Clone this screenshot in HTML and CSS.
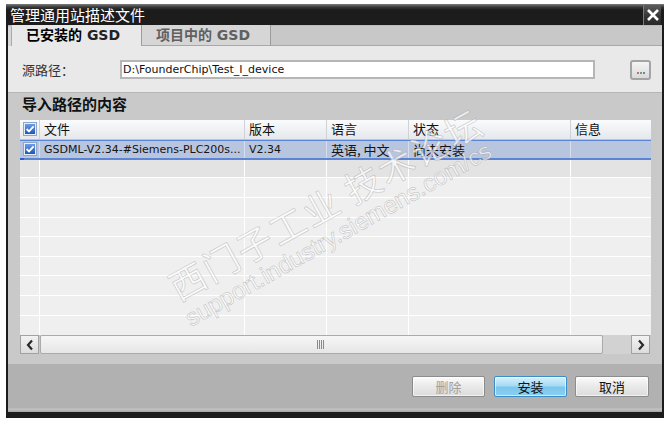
FILE: index.html
```html
<!DOCTYPE html>
<html lang="zh-CN">
<head>
<meta charset="utf-8">
<title>管理通用站描述文件</title>
<link rel="stylesheet" href="styles.css">
</head>
<body>
<div class="dialog">
  <div class="titlebar">
    <span class="title">管理通用站描述文件</span>
    <span class="close"><svg width="14" height="14" viewBox="0 0 14 14"><path d="M2 2 L12 12 M12 2 L2 12" stroke="#fff" stroke-width="2.6" fill="none"/></svg></span>
  </div>
  <div class="main">
    <div class="tabs">
      <div class="tab-stub"></div>
      <div class="tab active">已安装的 <span class="gsd">GSD</span></div>
      <div class="tab inactive">项目中的 GSD</div>
    </div>
    <div class="source">
      <span class="label">源路径：</span>
      <div class="input">D:\FounderChip\Test_I_device</div>
      <div class="browse"><i class="d1"></i><i class="d2"></i><i class="d3"></i></div>
    </div>
    <div class="section">
      <div class="section-title">导入路径的内容</div>
      <div class="table">
        <div class="row head">
          <div class="cell c0"><svg class="cb" width="14" height="14" viewBox="0 0 14 14"><defs><linearGradient id="g1" x1="0" y1="0" x2="0" y2="1"><stop offset="0" stop-color="#6e9de6"/><stop offset="1" stop-color="#1d55b8"/></linearGradient></defs><rect x="0.5" y="0.5" width="13" height="13" fill="#e8eef8" stroke="#8ea7c9"/><rect x="2" y="2" width="10" height="10" fill="url(#g1)"/><path d="M3.6 7 L6 9.4 L10.6 4.4" stroke="#fff" stroke-width="1.8" fill="none"/></svg></div>
          <div class="cell zh">文件</div>
          <div class="cell zh">版本</div>
          <div class="cell zh">语言</div>
          <div class="cell zh">状态</div>
          <div class="cell zh last">信息</div>
        </div>
        <div class="row sel">
          <div class="cell c0"><svg class="cb" width="14" height="14" viewBox="0 0 14 14"><defs><linearGradient id="g2" x1="0" y1="0" x2="0" y2="1"><stop offset="0" stop-color="#6e9de6"/><stop offset="1" stop-color="#1d55b8"/></linearGradient></defs><rect x="0.5" y="0.5" width="13" height="13" fill="#e8eef8" stroke="#8ea7c9"/><rect x="2" y="2" width="10" height="10" fill="url(#g2)"/><path d="M3.6 7 L6 9.4 L10.6 4.4" stroke="#fff" stroke-width="1.8" fill="none"/></svg></div>
          <div class="cell lat">GSDML-V2.34-#Siemens-PLC200s...</div>
          <div class="cell lat">V2.34</div>
          <div class="cell zh">英语, 中文</div>
          <div class="cell zh">尚未安装</div>
          <div class="cell last"></div>
        </div>
        <div class="row empty alt h18"><div class="cell"></div><div class="cell"></div><div class="cell"></div><div class="cell"></div><div class="cell"></div><div class="cell last"></div></div>
        <div class="row empty"><div class="cell"></div><div class="cell"></div><div class="cell"></div><div class="cell"></div><div class="cell"></div><div class="cell last"></div></div>
        <div class="row empty"><div class="cell"></div><div class="cell"></div><div class="cell"></div><div class="cell"></div><div class="cell"></div><div class="cell last"></div></div>
        <div class="row empty h19"><div class="cell"></div><div class="cell"></div><div class="cell"></div><div class="cell"></div><div class="cell"></div><div class="cell last"></div></div>
        <div class="row empty"><div class="cell"></div><div class="cell"></div><div class="cell"></div><div class="cell"></div><div class="cell"></div><div class="cell last"></div></div>
        <div class="row empty h19"><div class="cell"></div><div class="cell"></div><div class="cell"></div><div class="cell"></div><div class="cell"></div><div class="cell last"></div></div>
        <div class="row empty"><div class="cell"></div><div class="cell"></div><div class="cell"></div><div class="cell"></div><div class="cell"></div><div class="cell last"></div></div>
        <div class="row empty"><div class="cell"></div><div class="cell"></div><div class="cell"></div><div class="cell"></div><div class="cell"></div><div class="cell last"></div></div>
        <div class="row empty h20 nob"><div class="cell"></div><div class="cell"></div><div class="cell"></div><div class="cell"></div><div class="cell"></div><div class="cell last"></div></div>
        <div class="scrollbar">
          <div class="sbtn"><svg width="10" height="12" viewBox="0 0 10 12"><path d="M7 1.5 L3 6 L7 10.5" stroke="#2a2a2a" stroke-width="2.2" fill="none"/></svg></div>
          <div class="thumb"><svg width="10" height="9" viewBox="0 0 10 9"><path d="M1.5 0 V9 M3.5 0 V9 M5.5 0 V9 M7.5 0 V9" stroke="#8a8a8a" stroke-width="1" fill="none"/></svg></div>
          <div class="track"></div>
          <div class="sbtn"><svg width="10" height="12" viewBox="0 0 10 12"><path d="M3 1.5 L7 6 L3 10.5" stroke="#2a2a2a" stroke-width="2.2" fill="none"/></svg></div>
        </div>
      </div>
    </div>
    <div class="footer">
      <div class="btn disabled">删除</div>
      <div class="btn primary">安装</div>
      <div class="btn cancel">取消</div>
    </div>
  </div>
  <div class="wm wm-zh">西门子工业 技术论坛</div>
  <div class="wm wm-url">support.industry.siemens.com/cs</div>
</div>
</body>
</html>
```

FILE: styles.css
```css
* { box-sizing: border-box; }
body {
  margin: 0;
  background: #ffffff;
  font-family: "DejaVu Sans", "Noto Sans CJK SC", sans-serif;
  color: #111;
}
.dialog {
  position: relative;
  width: 658px;
  margin: 4px 0 0 6px;
  overflow: hidden;
}
.titlebar {
  height: 21px;
  display: flex;
  align-items: center;
  justify-content: space-between;
  padding-left: 4px;
  background: linear-gradient(#7c7c7c 0, #3a3a3a 3px, #1c1c1c 6px, #1c1c1c 100%);
}
.title {
  color: #fff;
  font-family: "Noto Sans CJK SC", sans-serif;
  font-size: 15px;
  line-height: 21px;
}
.close {
  width: 18px;
  height: 20px;
  margin: 1px 3px 0 0;
  display: flex;
  align-items: center;
  justify-content: center;
  background: linear-gradient(#5c5c5c, #333 60%, #2a2a2a);
  border-left: 1px solid #7a7a7a;
}
.main {
  border: 2px solid #1c1c1c;
  border-top: 0;
  border-bottom-width: 6px;
}
.tabs {
  height: 21px;
  display: flex;
  background: #c8c8c8;
  box-shadow: inset 0 -1px #a8a8a8, inset 0 1px #bcbcbc;
}
.tab-stub {
  width: 4px;
  background: #d8d8d8;
  border-right: 1px solid #aaa;
  margin-top: 2px;
}
.tab {
  height: 21px;
  font-family: "DejaVu Sans", "Noto Sans CJK SC", sans-serif;
  font-size: 14px;
  font-weight: bold;
  line-height: 21px;
  padding-left: 14px;
  white-space: nowrap;
}
.tab.active {
  width: 129px;
  background: #e9e9e9;
  color: #000;
}
.tab.active .gsd { color: #222; }
.tab.inactive {
  width: 130px;
  background: #d6d6d6;
  color: #606060;
  border-left: 1px solid #9c9c9c;
  border-right: 1px solid #9c9c9c;
  border-bottom: 1px solid #a8a8a8;
}
.source {
  height: 46px;
  background: #e9e9e9;
  display: flex;
  align-items: center;
  padding-left: 14px;
}
.label {
  width: 98px;
  font-family: "Noto Sans CJK SC", sans-serif;
  font-size: 13px;
  color: #333;
}
.input {
  width: 475px;
  height: 19px;
  background: #fff;
  border: 2px solid #b6b6b6;
  font-size: 11px;
  line-height: 15px;
  padding-left: 1px;
  color: #111;
}
.browse {
  width: 21px;
  height: 20px;
  margin-left: 35px;
  margin-top: 2px;
  border: 2px solid #a4a4a4;
  border-radius: 3px;
  background: linear-gradient(#f4f4f4, #dadada);
  display: flex;
  justify-content: center;
  align-items: flex-end;
  gap: 1px;
  padding-bottom: 4px;
}
.browse i { display: block; width: 2px; height: 2px; }
.browse .d1 { background: #c27070; }
.browse .d2 { background: #7b9a7b; }
.browse .d3 { background: #7080b8; }
.section {
  background: #c9c9c9;
  border-top: 1px solid #b6b6b6;
  padding: 0 11px 10px 12px;
}
.section-title {
  height: 27px;
  padding: 1px 0 0 2px;
  font-family: "Noto Sans CJK SC", sans-serif;
  font-size: 15px;
  font-weight: bold;
  line-height: 20px;
  color: #111;
}
.table {
  width: 631px;
  background: #efefef;
}
.row {
  display: grid;
  grid-template-columns: 20px 205px 82px 82px 162px 80px;
  height: 20px;
}
.cell {
  border-right: 1px solid #fff;
  padding-left: 4px;
  white-space: nowrap;
  line-height: 18px;
}
.cell.last { border-right: 0; }
.zh { font-family: "Noto Sans CJK SC", sans-serif; font-size: 13px; }
.lat { font-size: 11px; }
.c0 { padding-left: 3px; position: relative; }
.cb { display: block; margin-top: 2px; }
.row.head {
  height: 20px;
  background: linear-gradient(#fafbfc, #e5e8ec);
  border-bottom: 1px solid #c2c4c8;
}
.row.head .cell { border-right: 1px solid #cfd2d6; line-height: 18px; }
.row.head .cell.last { border-right: 0; }
.row.sel {
  height: 20px;
  background: #b8c5df;
  border-top: 1px solid #5c84d4;
  border-bottom: 2px solid #5c84d4;
}
.row.sel .cell { border-right: 1px solid #d6ddec; line-height: 17px; color: #141414; }
.row.sel .cell.last { border-right: 0; }
.row.sel .c0::after {
  content: "";
  position: absolute;
  left: 0;
  bottom: -2px;
  width: 4px;
  height: 2px;
  background: #2d5fd0;
}
.row.sel .cb { margin-top: 1px; }
.row.empty { border-bottom: 1px solid #fff; }
.row.alt { background: #e3e3e3; }
.row.h18 { height: 18px; }
.row.h19 { height: 19px; }
.row.nob { border-bottom: 0; height: 19px; }
.scrollbar {
  height: 19px;
  display: flex;
  background: #c9c9c9;
}
.sbtn {
  width: 19px;
  height: 19px;
  border: 1px solid #a2a2a2;
  background: linear-gradient(#f2f2f2, #dcdcdc);
  display: flex;
  align-items: center;
  justify-content: center;
}
.thumb {
  width: 563px;
  margin-left: 1px;
  height: 19px;
  border: 1px solid #ababab;
  border-radius: 2px;
  background: linear-gradient(#f6f6f6, #e6e6e6);
  display: flex;
  align-items: center;
  justify-content: center;
  padding-right: 1px;
}
.track {
  width: 28px;
  background: #d2d2d2;
}
.footer {
  height: 48px;
  background: linear-gradient(#b1b1b1 0, #b1b1b1 44px, #c6c6c6 45px, #a4a4a4 48px);
  display: flex;
  justify-content: flex-end;
  align-items: flex-start;
  gap: 9px;
  padding: 12px 13px 0 0;
}
.btn {
  width: 73px;
  height: 21px;
  border: 1px solid #8c8c8c;
  border-radius: 2px;
  background: linear-gradient(#fbfbfb, #e9e9e9 50%, #dcdcdc);
  box-shadow: inset 0 0 0 1px rgba(255,255,255,0.6);
  font-family: "Noto Sans CJK SC", sans-serif;
  font-size: 13px;
  line-height: 19px;
  text-align: center;
  color: #111;
}
.btn.cancel { width: 74px; margin-left: -1px; }
.btn.disabled { color: #a0a0a0; }
.btn.primary {
  border-color: #3d8cc6;
  background: linear-gradient(#d6f1fd, #a6dbf5 45%, #7ac6ee 55%, #8ccff0);
}
.wm {
  position: absolute;
  white-space: nowrap;
  pointer-events: none;
  color: rgba(255, 255, 255, 0.7);
  -webkit-text-stroke: 0.7px rgba(130, 130, 130, 0.4);
  transform-origin: 0 50%;
}
.wm-zh {
  left: 165px;
  top: 264px;
  font-family: "Noto Sans CJK SC", sans-serif;
  font-size: 36px;
  line-height: 40px;
  letter-spacing: 2px;
  transform: rotate(-29deg);
}
.wm-url {
  left: 181px;
  top: 302px;
  font-family: "Liberation Sans", sans-serif;
  font-size: 24px;
  line-height: 28px;
  transform: rotate(-29.5deg);
}
```
